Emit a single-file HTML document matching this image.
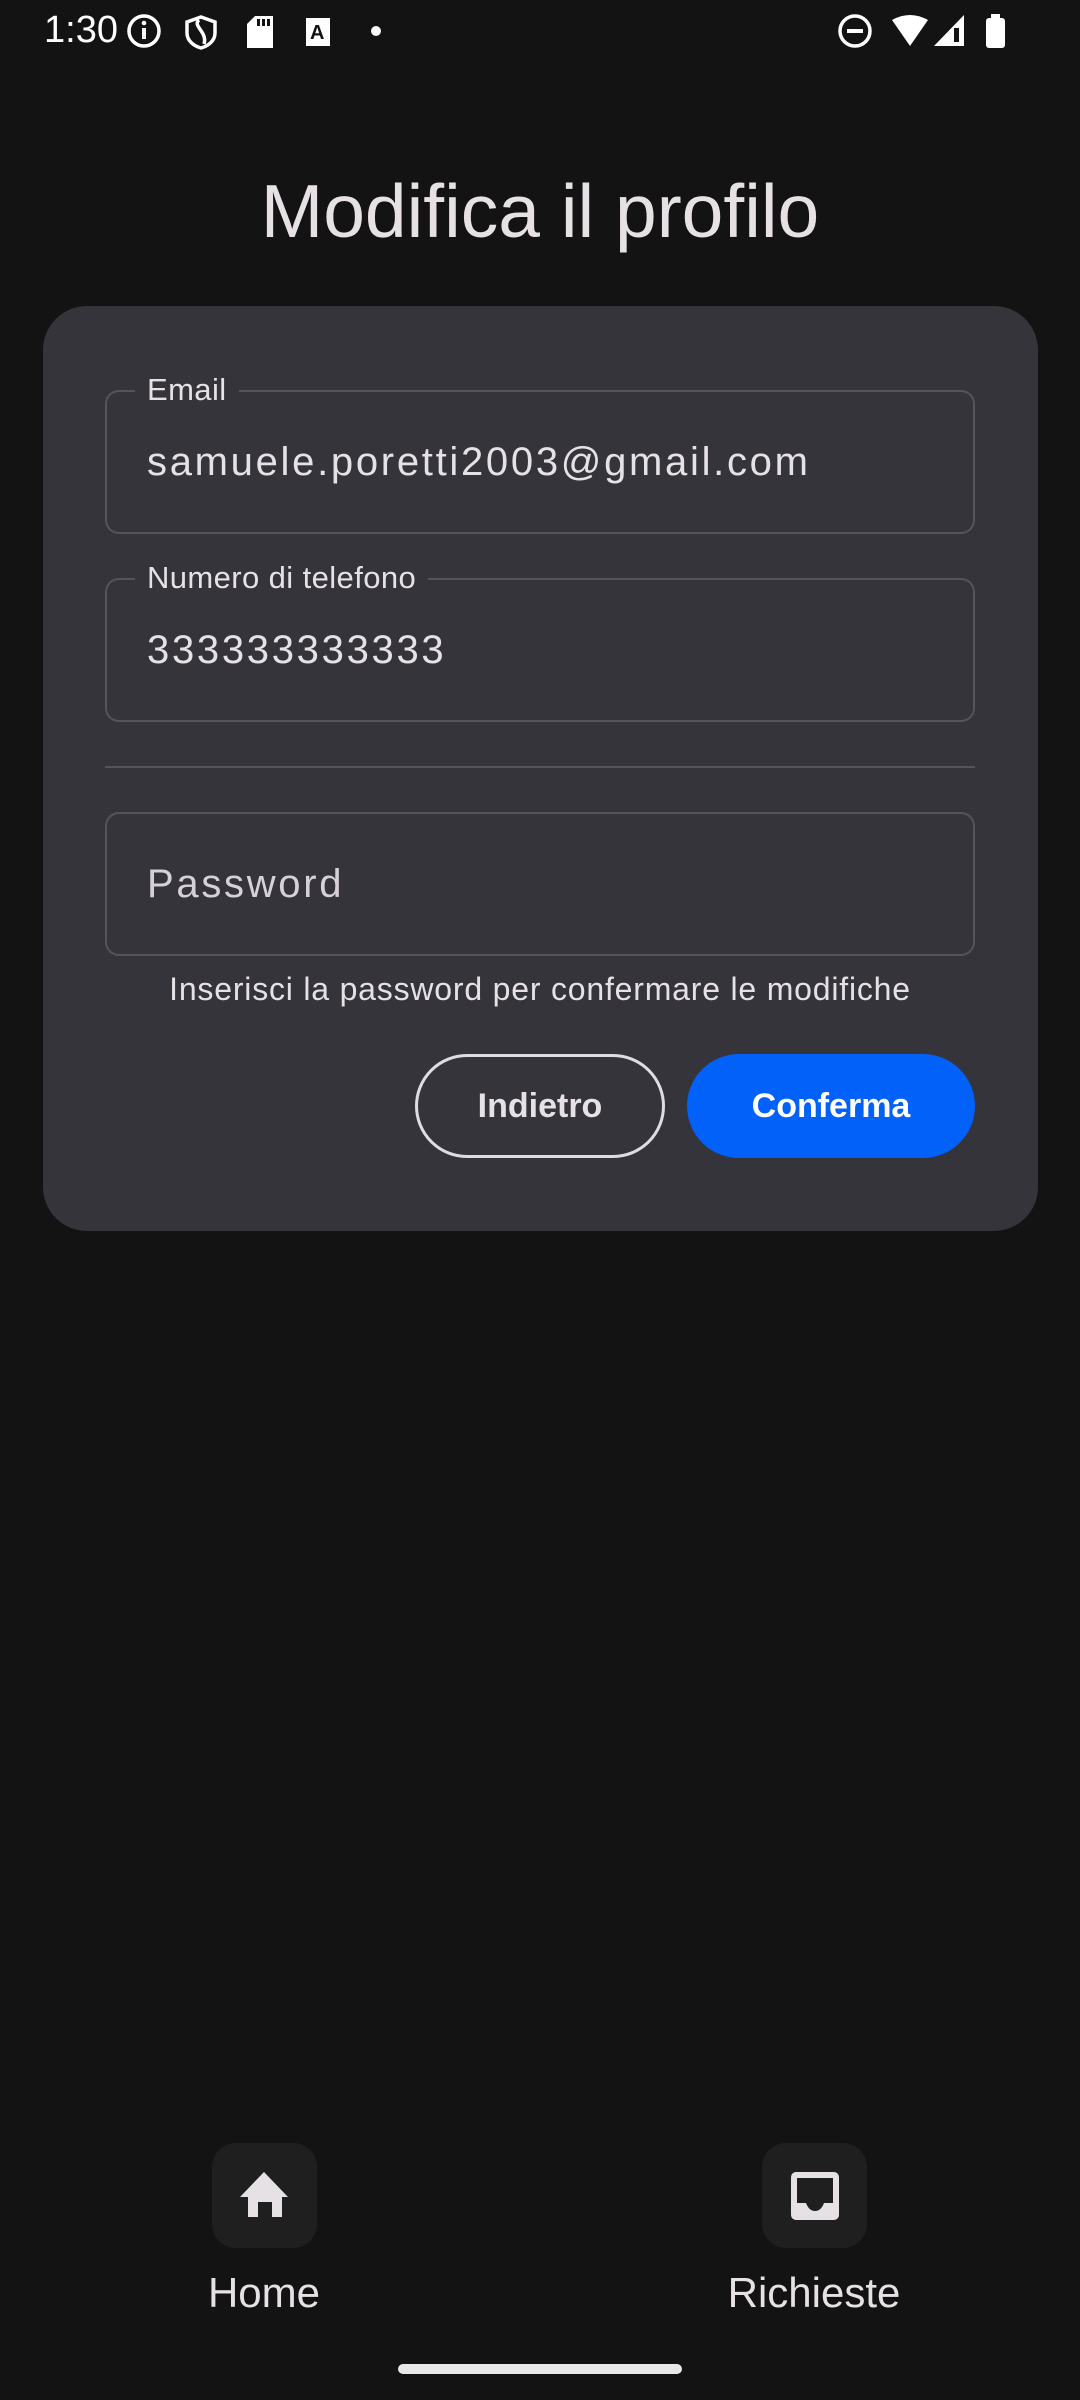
<!DOCTYPE html>
<html><head><meta charset="utf-8"><style>
*{margin:0;padding:0;box-sizing:border-box}
body{width:1080px;height:2400px;background:#131313;font-family:"Liberation Sans",sans-serif;color:#e6e1e5;position:relative;overflow:hidden}
.abs{position:absolute}
.card{left:43px;top:306px;width:995px;height:925px;background:#35343b;border-radius:44px}
.field{position:absolute;left:105px;width:870px;height:144px;border:2px solid #55545b;border-radius:14px}
.lbl{position:absolute;top:-22px;left:28px;padding:0 12px;background:#35343b;font-size:31px;color:#e6e1e5;line-height:40px;letter-spacing:0.4px}
.val{position:absolute;left:40px;top:0;height:140px;line-height:140px;font-size:40px;letter-spacing:2.7px}
</style></head><body>
<div class="abs" style="left:44px;top:8px;font-size:38px;color:#fff;line-height:44px">1:30</div>
<svg class="abs" style="left:126px;top:12px" width="290" height="40" viewBox="0 0 290 40">
<circle cx="18" cy="19" r="15" fill="none" stroke="#fff" stroke-width="3.5"/><rect x="16" y="16" width="4" height="11" fill="#fff"/><circle cx="18" cy="11" r="2.3" fill="#fff"/>
<path d="M75 5 L89 10 V21 C89 29 82 34 75 36 C68 34 61 29 61 21 V10 Z" fill="none" stroke="#fff" stroke-width="3.5"/><path d="M73 8 C66 14 82 20 78 32" fill="none" stroke="#fff" stroke-width="3.5"/>
<path d="M129 4 H147 V36 H121 V12 Z" fill="#fff"/><rect x="131" y="7" width="3" height="7" fill="#131313"/><rect x="136" y="7" width="3" height="7" fill="#131313"/><rect x="141" y="7" width="3" height="7" fill="#131313"/>
<rect x="180" y="6" width="24" height="28" fill="#fff"/><text x="184" y="27" font-size="20" font-weight="bold" fill="#131313" font-family="Liberation Sans">A</text>
<circle cx="250" cy="19" r="5" fill="#fff"/>
</svg>
<svg class="abs" style="left:836px;top:12px" width="180" height="40" viewBox="0 0 180 40">
<circle cx="19" cy="19" r="15" fill="none" stroke="#fff" stroke-width="3.5"/><rect x="11" y="17" width="16" height="4" fill="#fff"/>
<path d="M56 8 Q74 -2 92 8 L74 34 Z" fill="#fff"/>
<path d="M98 34 L128 3 V34 Z" fill="#fff"/><rect x="118" y="16" width="5" height="14" fill="#131313"/>
<rect x="150" y="6" width="19" height="30" rx="3" fill="#fff"/><rect x="155" y="2" width="9" height="5" fill="#fff"/>
</svg>
<div class="abs" style="left:0;width:1080px;top:166px;text-align:center;font-size:75px;line-height:90px;color:#e6e1e5">Modifica il profilo</div>
<div class="abs card"></div>
<div class="field" style="top:390px"><div class="lbl">Email</div><div class="val">samuele.poretti2003@gmail.com</div></div>
<div class="field" style="top:578px"><div class="lbl">Numero di telefono</div><div class="val">333333333333</div></div>
<div class="abs" style="left:105px;top:766px;width:870px;height:2px;background:#55545b"></div>
<div class="field" style="top:812px"><div class="val" style="color:#d6d1d6">Password</div></div>
<div class="abs" style="left:0;width:1080px;top:969px;text-align:center;font-size:32px;letter-spacing:0.8px;line-height:40px;color:#e6e1e5">Inserisci la password per confermare le modifiche</div>
<div class="abs" style="left:415px;top:1054px;width:250px;height:104px;border:3px solid #e0dde0;border-radius:52px;text-align:center;line-height:98px;font-size:34px;font-weight:bold;color:#e6e1e5">Indietro</div>
<div class="abs" style="left:687px;top:1054px;width:288px;height:104px;background:#0261f9;border-radius:52px;text-align:center;line-height:104px;font-size:34px;font-weight:bold;color:#fff">Conferma</div>
<div class="abs" style="left:212px;top:2143px;width:105px;height:105px;background:#1f1f1f;border-radius:24px"></div>
<svg class="abs" style="left:238px;top:2170px" width="54" height="50" viewBox="0 0 54 50"><path d="M26 2 L50 27 H44 V47 H34 V32 H20 V47 H10 V27 H2 Z" fill="#e6e1e5"/></svg>
<div class="abs" style="left:762px;top:2143px;width:105px;height:105px;background:#1f1f1f;border-radius:24px"></div>
<svg class="abs" style="left:788px;top:2170px" width="54" height="52" viewBox="0 0 54 52"><rect x="3" y="2" width="48" height="48" rx="5" fill="#e6e1e5"/><path d="M9 8 H45 V33 H36 Q33 41 27 41 Q21 41 18 33 H9 Z" fill="#1f1f1f"/></svg>
<div class="abs" style="left:164px;width:200px;top:2265px;text-align:center;font-size:42px;line-height:56px;color:#e6e1e5">Home</div>
<div class="abs" style="left:714px;width:200px;top:2265px;text-align:center;font-size:42px;line-height:56px;color:#e6e1e5">Richieste</div>
<div class="abs" style="left:398px;top:2364px;width:284px;height:10px;border-radius:5px;background:#e8e8e8"></div>
</body></html>
